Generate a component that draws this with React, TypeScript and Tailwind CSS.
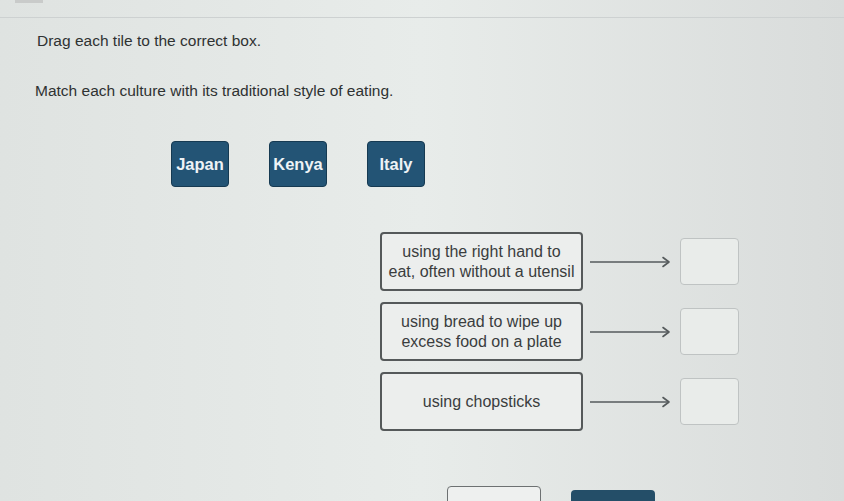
import React from "react";

const tiles = ["Japan", "Kenya", "Italy"];

const prompts = [
  ["using the right hand to", "eat, often without a utensil"],
  ["using bread to wipe up", "excess food on a plate"],
  ["using chopsticks"],
];

function Arrow() {
  return (
    <svg width="82" height="14" viewBox="0 0 82 14" className="shrink-0">
      <line x1="0" y1="7" x2="79" y2="7" stroke="#555a5c" strokeWidth="1.6" />
      <path d="M73 2.5 L79 7 L73 11.5" fill="none" stroke="#555a5c" strokeWidth="1.6" strokeLinecap="round" strokeLinejoin="round" />
    </svg>
  );
}

export default function App() {
  return (
    <div
      className="relative flex h-[501px] w-[844px] flex-col overflow-hidden bg-gradient-to-r from-[#dfe3e1] via-[#e8ecea] to-[#d9dcdb] text-[#2f3232]"
      style={{ fontFamily: '"Liberation Sans", Arial, sans-serif' }}
    >
      {/* header strip */}
      <div className="flex h-[18px] shrink-0 items-start border-b border-[#cdd1d1]">
        <div className="ml-[15px] h-[3px] w-[28px] bg-[#c9cbca]" />
      </div>

      <p className="ml-[37px] mt-[13px] text-[15.5px] leading-[20px]">Drag each tile to the correct box.</p>
      <p className="ml-[35px] mt-[30px] text-[15.5px] leading-[20px]">
        Match each culture with its traditional style of eating.
      </p>

      {/* draggable tiles */}
      <div className="ml-[171px] mt-[40px] flex gap-[40px]">
        {tiles.map((t) => (
          <div
            key={t}
            className="flex h-[46px] w-[58px] items-center justify-center rounded-[4px] border border-[#163a52] bg-[#235475] text-[16.5px] font-bold text-[#eef3f6]"
          >
            {t}
          </div>
        ))}
      </div>

      {/* matching rows */}
      <div className="ml-[380px] mt-[45px] flex flex-col gap-[11px]">
        {prompts.map((lines, i) => (
          <div key={i} className="flex items-center">
            <div className="flex h-[59px] w-[203px] flex-col items-center justify-center rounded-[4px] border-2 border-[#55595a] bg-[#eceeed] text-[16px] leading-[20px] text-[#3a3d3e]">
              {lines.map((l) => (
                <span key={l} className="whitespace-nowrap">
                  {l}
                </span>
              ))}
            </div>
            <div className="ml-[7px]">
              <Arrow />
            </div>
            <div className="ml-[8px] h-[47px] w-[59px] rounded-[4px] border-[1.5px] border-[#bfc3c3] bg-[#e9ecea]" />
          </div>
        ))}
      </div>

      {/* action buttons, cut off at the bottom edge */}
      <div className="ml-[447px] mt-[55px] flex items-start gap-[30px]">
        <div className="h-[20px] w-[94px] rounded-[4px] border-[1.5px] border-[#6d7172] bg-[#eef0ef]" />
        <div className="mt-[4px] h-[20px] w-[84px] rounded-[4px] bg-[#244e68]" />
      </div>
    </div>
  );
}
